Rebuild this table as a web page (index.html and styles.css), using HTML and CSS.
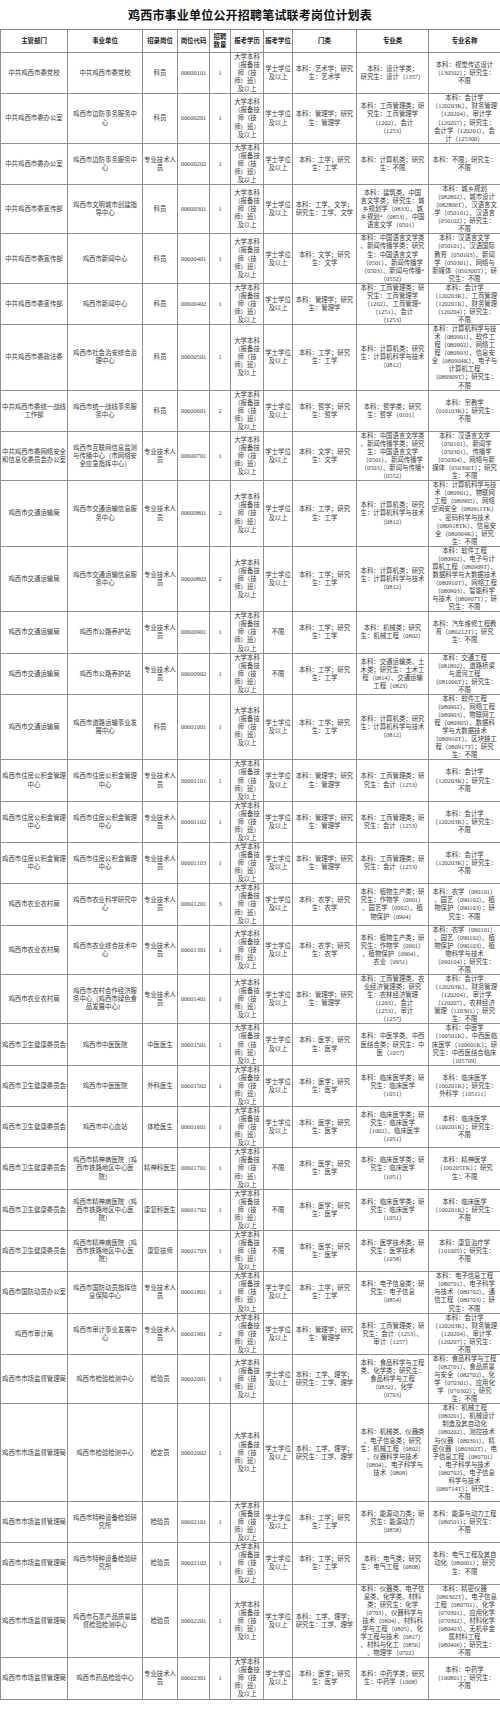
FILE: index.html
```html
<!DOCTYPE html>
<html lang="zh-CN">
<head>
<meta charset="utf-8">
<title>鸡西市事业单位公开招聘笔试联考岗位计划表</title>
<link rel="stylesheet" href="styles.css">
</head>
<body>
<div class="page">
<h1 class="title">鸡西市事业单位公开招聘笔试联考岗位计划表</h1>
<table class="plan">
<colgroup>
<col class="c-dept"><col class="c-unit"><col class="c-post"><col class="c-code"><col class="c-num"><col class="c-edu"><col class="c-deg"><col class="c-cat"><col class="c-cls"><col class="c-name">
</colgroup>
<thead>
<tr><th>主管部门</th><th>事业单位</th><th>招录岗位</th><th>岗位代码</th><th>招聘<br>数量</th><th>报考学历</th><th>报考学位</th><th>门类</th><th>专业类</th><th>专业名称</th></tr>
</thead>
<tbody>
<tr><td>中共鸡西市委党校</td><td>中共鸡西市委党校</td><td>科员</td><td>00600101</td><td>1</td><td>大学本科<br>（报备技<br>师（技<br>师）班）<br>及以上</td><td>学士学位<br>及以上</td><td>本科：艺术学；研究<br>生：艺术学</td><td>本科：设计学类；<br>研究生：设计（1357）</td><td>本科：视觉传达设计<br>（130502）；研究生：<br>不限</td></tr>
<tr><td>中共鸡西市委办公室</td><td>鸡西市边防事务服务中<br>心</td><td>科员</td><td>00600201</td><td>1</td><td>大学本科<br>（报备技<br>师（技<br>师）班）<br>及以上</td><td>学士学位<br>及以上</td><td>本科：管理学；研究<br>生：管理学</td><td>本科：工商管理类；研<br>究生：工商管理学<br>（1202）、会计<br>（1253）</td><td>本科：会计学<br>（120203K）、财务管理<br>（120204）、审计学<br>（120207）；研究生：<br>会计学（120201）、会<br>计（125300）</td></tr>
<tr><td>中共鸡西市委办公室</td><td>鸡西市边防事务服务中<br>心</td><td>专业技术人<br>员</td><td>00600202</td><td>1</td><td>大学本科<br>（报备技<br>师（技<br>师）班）<br>及以上</td><td>学士学位<br>及以上</td><td>本科：工学；研究<br>生：工学</td><td>本科：计算机类；研究<br>生：不限</td><td>本科：不限；研究生：<br>不限</td></tr>
<tr><td>中共鸡西市委宣传部</td><td>鸡西市文明城市创建指<br>导中心</td><td>科员</td><td>00600301</td><td>1</td><td>大学本科<br>（报备技<br>师（技<br>师）班）<br>及以上</td><td>学士学位<br>及以上</td><td>本科：工学、文学；<br>研究生：工学、文学</td><td>本科：建筑类、中国<br>言文学类；研究生：城<br>乡规划学（0833）、城<br>乡规划*（0853）、中国<br>语言文学（0501）</td><td>本科：城乡规划<br>（082802）、城市设计<br>（082806T）、汉语言文<br>学（050101）、汉语言<br>（050102）；研究生：<br>不限</td></tr>
<tr><td>中共鸡西市委宣传部</td><td>鸡西市新闻中心</td><td>科员</td><td>00600401</td><td>1</td><td>大学本科<br>（报备技<br>师（技<br>师）班）<br>及以上</td><td>学士学位<br>及以上</td><td>本科：文学；研究<br>生：文学</td><td>本科：中国语言文学类<br>、新闻传播学类；研究<br>生：中国语言文学<br>（0501）、新闻传播学<br>（0503）、新闻与传播*<br>（0552）</td><td>本科：汉语言文学<br>（050101）、汉语国际<br>教育（050103）、新闻<br>学（050301）、网络与<br>新媒体（050306T）；研<br>究生：不限</td></tr>
<tr><td>中共鸡西市委宣传部</td><td>鸡西市新闻中心</td><td>科员</td><td>00600402</td><td>1</td><td>大学本科<br>（报备技<br>师（技<br>师）班）<br>及以上</td><td>学士学位<br>及以上</td><td>本科：管理学；研究<br>生：管理学</td><td>本科：工商管理类；研<br>究生：工商管理学<br>（1202）、工商管理*<br>（1251）、会计<br>（1253）</td><td>本科：会计学<br>（120203K）、工商管理<br>（120201K）、财务管理<br>（120204）；研究生：<br>不限</td></tr>
<tr><td>中共鸡西市委政法委</td><td>鸡西市社会治安综合治<br>理中心</td><td>科员</td><td>00600501</td><td>1</td><td>大学本科<br>（报备技<br>师（技<br>师）班）<br>及以上</td><td>学士学位<br>及以上</td><td>本科：工学；研究<br>生：工学</td><td>本科：计算机类；研究<br>生：计算机科学与技术<br>（0812）</td><td>本科：计算机科学与技<br>术（080901）、软件工<br>程（080902）、网络工<br>程（080903）、信息安<br>全（080904K）、电子与<br>计算机工程<br>（080909T）；研究生：<br>不限</td></tr>
<tr><td>中共鸡西市委统一战线<br>工作部</td><td>鸡西市统一战线事务服<br>务中心</td><td>科员</td><td>00600601</td><td>2</td><td>大学本科<br>（报备技<br>师（技<br>师）班）<br>及以上</td><td>学士学位<br>及以上</td><td>本科：哲学；研究<br>生：哲学</td><td>本科：哲学类；研究<br>生：哲学（0101）</td><td>本科：宗教学<br>（010103K）；研究生：<br>不限</td></tr>
<tr><td>中共鸡西市委网络安全<br>和信息化委员会办公室</td><td>鸡西市互联网信息监测<br>与传播中心（市网络安<br>全应急指挥中心）</td><td>专业技术人<br>员</td><td>00600701</td><td>1</td><td>大学本科<br>（报备技<br>师（技<br>师）班）<br>及以上</td><td>学士学位<br>及以上</td><td>本科：文学；研究<br>生：文学</td><td>本科：中国语言文学类<br>、新闻传播学类；研究<br>生：中国语言文学<br>（0501）、新闻传播学<br>（0503）、新闻与传播*<br>（0552）</td><td>本科：汉语言文学<br>（050101）、新闻学<br>（050301）、传播学<br>（050304）、网络与新<br>媒体（050306T）；研究<br>生：不限</td></tr>
<tr><td>鸡西市交通运输局</td><td>鸡西市交通运输信息服<br>务中心</td><td>专业技术人<br>员</td><td>00600801</td><td>2</td><td>大学本科<br>（报备技<br>师（技<br>师）班）<br>及以上</td><td>学士学位<br>及以上</td><td>本科：工学；研究<br>生：工学</td><td>本科：计算机类；研究<br>生：计算机科学与技术<br>（0812）</td><td>本科：计算机科学与技<br>术（080901）、物联网<br>工程（080905）、网络<br>空间安全（080911TK）<br>、密码科学与技术<br>（080918TK）、信息安<br>全（080904K）；研究<br>生：不限</td></tr>
<tr><td>鸡西市交通运输局</td><td>鸡西市交通运输信息服<br>务中心</td><td>专业技术人<br>员</td><td>00600802</td><td>2</td><td>大学本科<br>（报备技<br>师（技<br>师）班）<br>及以上</td><td>学士学位<br>及以上</td><td>本科：工学；研究<br>生：工学</td><td>本科：计算机类；研究<br>生：计算机科学与技术<br>（0812）</td><td>本科：软件工程<br>（080902）、电子与计<br>算机工程（080909T）、<br>数据科学与大数据技术<br>（080910T）、网络工程<br>（080903）、智能科学<br>与技术（080907T）；研<br>究生：不限</td></tr>
<tr><td>鸡西市交通运输局</td><td>鸡西市公路养护站</td><td>专业技术人<br>员</td><td>00600901</td><td>1</td><td>大学本科<br>（报备技<br>师（技<br>师）班）<br>及以上</td><td>不限</td><td>本科：工学；研究<br>生：工学</td><td>本科：机械类；研究<br>生：机械工程（0802）</td><td>本科：汽车维修工程教<br>育（080212T）；研究<br>生：不限</td></tr>
<tr><td>鸡西市交通运输局</td><td>鸡西市公路养护站</td><td>专业技术人<br>员</td><td>00600902</td><td>1</td><td>大学本科<br>（报备技<br>师（技<br>师）班）<br>及以上</td><td>不限</td><td>本科：工学；研究<br>生：工学</td><td>本科：交通运输类、土<br>木类；研究生：土木工<br>程（0814）、交通运输<br>工程（0823）</td><td>本科：交通工程<br>（081802）、道路桥梁<br>与渡河工程<br>（081006T）；研究生：<br>不限</td></tr>
<tr><td>鸡西市交通运输局</td><td>鸡西市道路运输事业发<br>展中心</td><td>科员</td><td>00601001</td><td>1</td><td>大学本科<br>（报备技<br>师（技<br>师）班）<br>及以上</td><td>学士学位<br>及以上</td><td>本科：工学；研究<br>生：工学</td><td>本科：计算机类；研究<br>生：计算机科学与技术<br>（0812）</td><td>本科：软件工程<br>（080902）、网络工程<br>（080903）、物联网工<br>程（080905）、数据科<br>学与大数据技术<br>（080910T）、区块链工<br>程（080917T）；研究<br>生：不限</td></tr>
<tr><td>鸡西市住房公积金管理<br>中心</td><td>鸡西市住房公积金管理<br>中心</td><td>专业技术人<br>员</td><td>00601101</td><td>1</td><td>大学本科<br>（报备技<br>师（技<br>师）班）<br>及以上</td><td>学士学位<br>及以上</td><td>本科：管理学；研究<br>生：管理学</td><td>本科：工商管理类；研<br>究生：会计（1253）</td><td>本科：会计学<br>（120203K）；研究生：<br>不限</td></tr>
<tr><td>鸡西市住房公积金管理<br>中心</td><td>鸡西市住房公积金管理<br>中心</td><td>专业技术人<br>员</td><td>00601102</td><td>1</td><td>大学本科<br>（报备技<br>师（技<br>师）班）<br>及以上</td><td>学士学位<br>及以上</td><td>本科：管理学；研究<br>生：管理学</td><td>本科：工商管理类；研<br>究生：会计（1253）</td><td>本科：会计学<br>（120203K）；研究生：<br>不限</td></tr>
<tr><td>鸡西市住房公积金管理<br>中心</td><td>鸡西市住房公积金管理<br>中心</td><td>专业技术人<br>员</td><td>00601103</td><td>1</td><td>大学本科<br>（报备技<br>师（技<br>师）班）<br>及以上</td><td>学士学位<br>及以上</td><td>本科：管理学；研究<br>生：管理学</td><td>本科：工商管理类；研<br>究生：会计（1253）</td><td>本科：会计学<br>（120203K）；研究生：<br>不限</td></tr>
<tr><td>鸡西市农业农村局</td><td>鸡西市农业科学研究中<br>心</td><td>专业技术人<br>员</td><td>00601201</td><td>3</td><td>大学本科<br>（报备技<br>师（技<br>师）班）<br>及以上</td><td>学士学位<br>及以上</td><td>本科：农学；研究<br>生：农学</td><td>本科：植物生产类；研<br>究生：作物学（0901）<br>、园艺学（0902）、植<br>物保护（0904）</td><td>本科：农学（090101）<br>、园艺（090102）、植<br>物保护（090103）；研<br>究生：不限</td></tr>
<tr><td>鸡西市农业农村局</td><td>鸡西市农业综合技术中<br>心</td><td>专业技术人<br>员</td><td>00601301</td><td>1</td><td>大学本科<br>（报备技<br>师（技<br>师）班）<br>及以上</td><td>学士学位<br>及以上</td><td>本科：农学；研究<br>生：农学</td><td>本科：植物生产类；研<br>究生：作物学（0901）<br>、植物保护（0904）、<br>农业（0951）</td><td>本科：农学（090101）<br>、园艺（090102）、植<br>物保护（090103）、植<br>物科学与技术<br>（090104）；研究生：<br>不限</td></tr>
<tr><td>鸡西市农业农村局</td><td>鸡西市农村合作经济服<br>务中心（鸡西市绿色食<br>品发展中心）</td><td>专业技术人<br>员</td><td>00601401</td><td>1</td><td>大学本科<br>（报备技<br>师（技<br>师）班）<br>及以上</td><td>学士学位<br>及以上</td><td>本科：管理学；研究<br>生：管理学</td><td>本科：工商管理类、农<br>业经济管理类；研究<br>生：农林经济管理<br>（1203）、会计<br>（1253）、审计<br>（1257）</td><td>本科：会计学<br>（120203K）、财务管理<br>（120204）、审计学<br>（120207）、农林经济<br>管理（120301）；研究<br>生：不限</td></tr>
<tr><td>鸡西市卫生健康委员会</td><td>鸡西市中医医院</td><td>中医医生</td><td>00601501</td><td>1</td><td>大学本科<br>（报备技<br>师（技<br>师）班）<br>及以上</td><td>学士学位<br>及以上</td><td>本科：医学；研究<br>生：医学</td><td>本科：中医学类、中西<br>医结合类；研究生：中<br>医（1057）</td><td>本科：中医学<br>（100501K）、中西医临<br>床医学（100601K）；研<br>究生：中西医结合临床<br>（105709）</td></tr>
<tr><td>鸡西市卫生健康委员会</td><td>鸡西市中医医院</td><td>外科医生</td><td>00601502</td><td>1</td><td>大学本科<br>（报备技<br>师（技<br>师）班）<br>及以上</td><td>学士学位<br>及以上</td><td>本科：医学；研究<br>生：医学</td><td>本科：临床医学类；研<br>究生：临床医学<br>（1051）</td><td>本科：临床医学<br>（100201K）；研究生：<br>外科学（105111）</td></tr>
<tr><td>鸡西市卫生健康委员会</td><td>鸡西市中心血站</td><td>体检医生</td><td>00601601</td><td>1</td><td>大学本科<br>（报备技<br>师（技<br>师）班）<br>及以上</td><td>学士学位<br>及以上</td><td>本科：医学；研究<br>生：医学</td><td>本科：临床医学类；研<br>究生：临床医学<br>（1002）、临床医学<br>（1051）</td><td>本科：临床医学<br>（100201K）；研究生：<br>不限</td></tr>
<tr><td>鸡西市卫生健康委员会</td><td>鸡西市精神病医院（鸡<br>西市铁路地区中心医<br>院）</td><td>精神科医生</td><td>00601701</td><td>1</td><td>大学本科<br>（报备技<br>师（技<br>师）班）<br>及以上</td><td>不限</td><td>本科：医学；研究<br>生：医学</td><td>本科：临床医学类；研<br>究生：临床医学<br>（1051）</td><td>本科：精神医学<br>（100205TK）；研究<br>生：不限</td></tr>
<tr><td>鸡西市卫生健康委员会</td><td>鸡西市精神病医院（鸡<br>西市铁路地区中心医<br>院）</td><td>康复科医生</td><td>00601702</td><td>1</td><td>大学本科<br>（报备技<br>师（技<br>师）班）<br>及以上</td><td>不限</td><td>本科：医学；研究<br>生：医学</td><td>本科：临床医学类；研<br>究生：临床医学<br>（1051）</td><td>本科：临床医学<br>（100201K）；研究生：<br>不限</td></tr>
<tr><td>鸡西市卫生健康委员会</td><td>鸡西市精神病医院（鸡<br>西市铁路地区中心医<br>院）</td><td>康复技师</td><td>00601703</td><td>1</td><td>大学本科<br>（报备技<br>师（技<br>师）班）<br>及以上</td><td>不限</td><td>本科：医学；研究<br>生：医学</td><td>本科：医学技术类；研<br>究生：医学技术<br>（1058）</td><td>本科：康复治疗学<br>（101005）；研究生：<br>不限</td></tr>
<tr><td>鸡西市国防动员办公室</td><td>鸡西市国防动员指挥信<br>息保障中心</td><td>专业技术人<br>员</td><td>00601801</td><td>1</td><td>大学本科<br>（报备技<br>师（技<br>师）班）<br>及以上</td><td>学士学位<br>及以上</td><td>本科：工学；研究<br>生：工学</td><td>本科：电子信息类；研<br>究生：电子信息<br>（0854）</td><td>本科：电子信息工程<br>（080701）、电子科学<br>与技术（080702）、通<br>信工程（080703）；研<br>究生：不限</td></tr>
<tr><td>鸡西市审计局</td><td>鸡西市审计事业发展中<br>心</td><td>专业技术人<br>员</td><td>00601901</td><td>2</td><td>大学本科<br>（报备技<br>师（技<br>师）班）<br>及以上</td><td>学士学位<br>及以上</td><td>本科：管理学；研究<br>生：管理学</td><td>本科：工商管理类；研<br>究生：会计（1253）、<br>审计（1257）</td><td>本科：会计学<br>（120203K）、财务管理<br>（120204）、审计学<br>（120207）；研究生：<br>不限</td></tr>
<tr><td>鸡西市市场监督管理局</td><td>鸡西市检验检测中心</td><td>检验员</td><td>00602001</td><td>1</td><td>大学本科<br>（报备技<br>师（技<br>师）班）<br>及以上</td><td>学士学位<br>及以上</td><td>本科：工学、理学；<br>研究生：工学、理学</td><td>本科：食品科学与工程<br>类、化学类；研究生：<br>食品科学与工程<br>（0832）、化学<br>（0703）</td><td>本科：食品科学与工程<br>（082701）、食品质量<br>与安全（082702）、化<br>学（070301）、应用化<br>学（070302）；研究<br>生：不限</td></tr>
<tr><td>鸡西市市场监督管理局</td><td>鸡西市检验检测中心</td><td>检定员</td><td>00602002</td><td>1</td><td>大学本科<br>（报备技<br>师（技<br>师）班）<br>及以上</td><td>学士学位<br>及以上</td><td>本科：工学、理学；<br>研究生：工学、理学</td><td>本科：机械类、仪器类<br>、电子信息类；研究<br>生：机械工程（0802）<br>、仪器科学与技术<br>（0804）、电子科学与<br>技术（0809）</td><td>本科：机械工程<br>（080201）、机械设计<br>制造及其自动化<br>（080202）、测控技术<br>与仪器（080301）、精<br>密仪器（080302T）、电<br>子信息工程（080701）<br>、电子科学与技术<br>（080702）、电子信息<br>科学与技术<br>（080714T）；研究生：<br>不限</td></tr>
<tr><td>鸡西市市场监督管理局</td><td>鸡西市特种设备检验研<br>究所</td><td>检验员</td><td>00602101</td><td>1</td><td>大学本科<br>（报备技<br>师（技<br>师）班）<br>及以上</td><td>学士学位<br>及以上</td><td>本科：工学；研究<br>生：工学</td><td>本科：能源动力类；研<br>究生：能源动力<br>（0858）</td><td>本科：能源与动力工程<br>（080501）；研究生：<br>不限</td></tr>
<tr><td>鸡西市市场监督管理局</td><td>鸡西市特种设备检验研<br>究所</td><td>检验员</td><td>00602102</td><td>1</td><td>大学本科<br>（报备技<br>师（技<br>师）班）<br>及以上</td><td>学士学位<br>及以上</td><td>本科：工学；研究<br>生：工学</td><td>本科：电气类；研究<br>生：电气工程（0808）</td><td>本科：电气工程及其自<br>动化（080601）；研究<br>生：不限</td></tr>
<tr><td>鸡西市市场监督管理局</td><td>鸡西市石墨产品质量监<br>督检验检测中心</td><td>检验员</td><td>00602201</td><td>1</td><td>大学本科<br>（报备技<br>师（技<br>师）班）<br>及以上</td><td>学士学位<br>及以上</td><td>本科：工学、理学；<br>研究生：工学、理学</td><td>本科：仪器类、电子信<br>息类、化学类、材料<br>类；研究生：化学<br>（0703）、仪器科学与<br>技术（0804）、材料科<br>学与工程（0805）、化<br>学工程与技术（0817）<br>、材料与化工（0856）<br>、物理学（0702）</td><td>本科：精密仪器<br>（080302T）、电子信息<br>工程（080701）、化学<br>（070301）、应用化学<br>（070302）、材料化学<br>（080403）、无机非金<br>属材料工程<br>（080406）；研究生：<br>不限</td></tr>
<tr><td>鸡西市市场监督管理局</td><td>鸡西市药品检验中心</td><td>专业技术人<br>员</td><td>00602301</td><td>1</td><td>大学本科<br>（报备技<br>师（技<br>师）班）<br>及以上</td><td>学士学位<br>及以上</td><td>本科：医学；研究<br>生：医学</td><td>本科：中药学类；研究<br>生：中药学（1008）</td><td>本科：中药学<br>（100801）；研究生：<br>不限</td></tr>
</tbody>
</table>
</div>
</body>
</html>
```

FILE: styles.css
```css
html, body {
  margin: 0;
  padding: 0;
  background: #ffffff;
}

.page {
  width: 500px;
  font-family: "Liberation Serif", "Noto Sans CJK SC", serif;
  color: #3a3a3a;
}

.title {
  margin: 0;
  height: 29px;
  display: flex;
  align-items: center;
  justify-content: center;
  font-family: "Noto Sans CJK SC", sans-serif;
  font-size: 12px;
  font-weight: 700;
  color: #111111;
  letter-spacing: 0.2px;
}

.plan {
  width: 500px;
  table-layout: fixed;
  border-collapse: collapse;
  font-size: 6.4px;
  line-height: 8.07px;
}

.c-dept { width: 67px; }
.c-unit { width: 75px; }
.c-post { width: 35px; }
.c-code { width: 32px; }
.c-num  { width: 21px; }
.c-edu  { width: 33px; }
.c-deg  { width: 29px; }
.c-cat  { width: 64px; }
.c-cls  { width: 72px; }
.c-name { width: 72px; }

.plan th,
.plan td {
  border: 1px solid #8f8f8f;
  padding: 0 1px;
  text-align: center;
  vertical-align: middle;
  white-space: nowrap;
  overflow: hidden;
}

.plan th {
  height: 22px;
  font-weight: 700;
  color: #222222;
}
```
